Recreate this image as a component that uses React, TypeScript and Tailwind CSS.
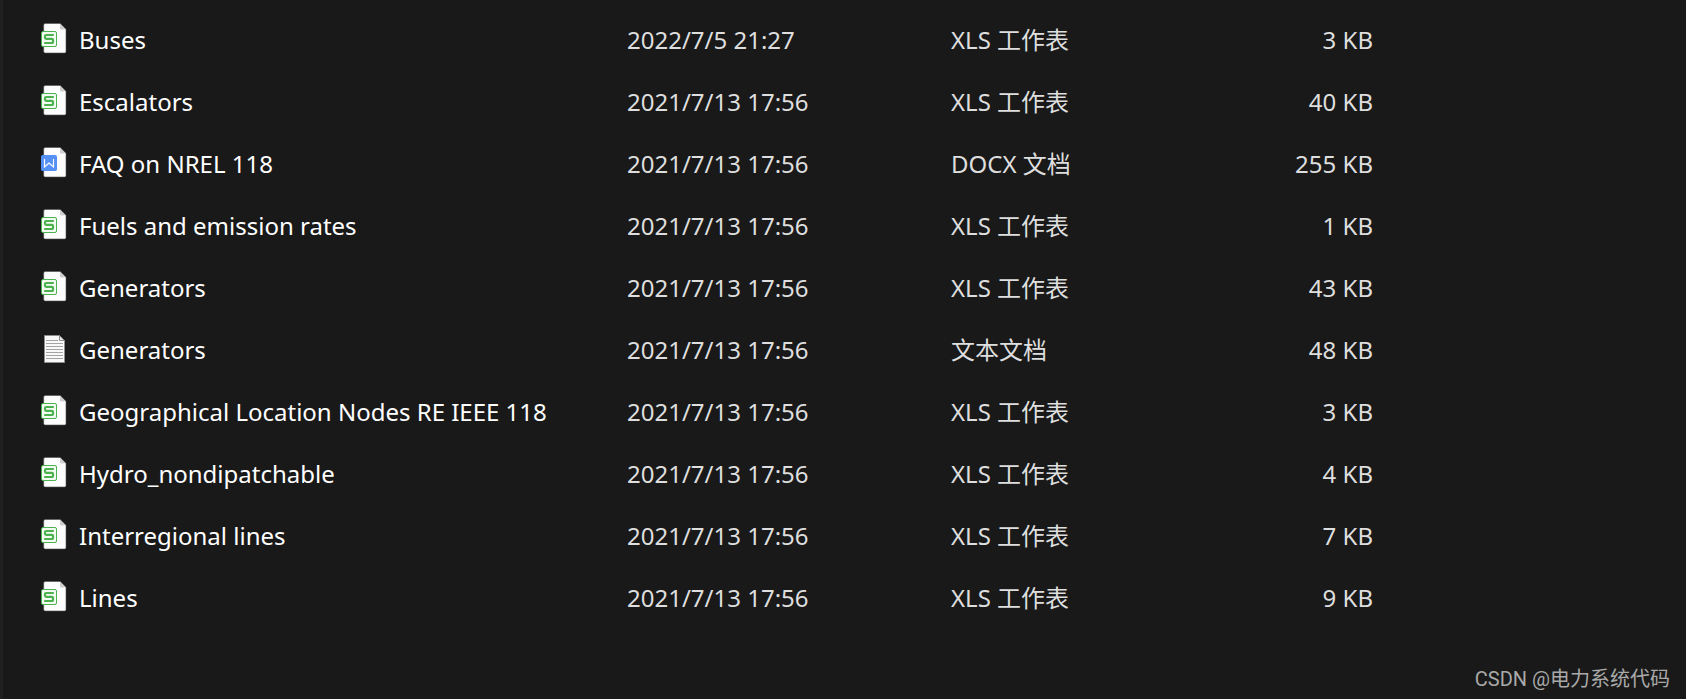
type FileKind = "xls" | "docx" | "txt";

type FileEntry = {
  name: string;
  modified: string;
  kind: FileKind;
  size: string;
};

const KIND_LABELS: Record<FileKind, string> = {
  xls: "XLS 工作表",
  docx: "DOCX 文档",
  txt: "文本文档",
};

const FILES: FileEntry[] = [
  { name: "Buses", modified: "2022/7/5 21:27", kind: "xls", size: "3 KB" },
  { name: "Escalators", modified: "2021/7/13 17:56", kind: "xls", size: "40 KB" },
  { name: "FAQ on NREL 118", modified: "2021/7/13 17:56", kind: "docx", size: "255 KB" },
  { name: "Fuels and emission rates", modified: "2021/7/13 17:56", kind: "xls", size: "1 KB" },
  { name: "Generators", modified: "2021/7/13 17:56", kind: "xls", size: "43 KB" },
  { name: "Generators", modified: "2021/7/13 17:56", kind: "txt", size: "48 KB" },
  {
    name: "Geographical Location Nodes RE IEEE 118",
    modified: "2021/7/13 17:56",
    kind: "xls",
    size: "3 KB",
  },
  { name: "Hydro_nondipatchable", modified: "2021/7/13 17:56", kind: "xls", size: "4 KB" },
  { name: "Interregional lines", modified: "2021/7/13 17:56", kind: "xls", size: "7 KB" },
  { name: "Lines", modified: "2021/7/13 17:56", kind: "xls", size: "9 KB" },
];

export default function App() {
  return (
    <div className="flex min-h-screen flex-col border-l-3 border-[#202020] bg-[#191919] font-['Noto_Sans','Noto_Sans_CJK_SC',sans-serif]">
      <main className="flex-1 pt-[9px] pl-9">
        <table className="w-full table-fixed text-left text-2xl whitespace-nowrap text-[#dedede]">
          <colgroup>
            <col className="w-[588px]" />
            <col className="w-[324px]" />
            <col className="w-[260px]" />
            <col className="w-[162px]" />
            <col />
          </colgroup>
          <tbody>
            {FILES.map((file) => (
              <tr key={`${file.name}.${file.kind}`} className="h-[62px]">
                <td className="p-0 text-white">
                  <div className="flex items-center gap-3">
                    <FileIcon kind={file.kind} />
                    <span>{file.name}</span>
                  </div>
                </td>
                <td className="p-0">{file.modified}</td>
                <td className="p-0">{KIND_LABELS[file.kind]}</td>
                <td className="p-0 text-right">{file.size}</td>
                <td className="p-0" />
              </tr>
            ))}
          </tbody>
        </table>
      </main>
      <footer className="px-4 pb-[6px] text-right font-[Roboto,'Noto_Sans_CJK_SC',sans-serif] text-xl text-[#a9a9a9]">
        CSDN @电力系统代码
      </footer>
    </div>
  );
}

function FileIcon({ kind }: { kind: FileKind }) {
  if (kind === "txt") {
    return (
      <svg viewBox="0 0 28 36" className="h-9 w-7 shrink-0" aria-hidden>
        <path d="M5.5 3.5h14.5l5.5 5v22h-20z" fill="#f8f8f8" stroke="#8d8d8d" />
        <path d="M20.5 3.5v5h5z" fill="#e4e4e4" stroke="#8d8d8d" />
        <path
          d="M7 8.5h12M7 11.5h17M7 14.5h17M7 17.5h17M7 20.5h17M7 23.5h17M7 26.5h17"
          stroke="#a3a3a3"
        />
      </svg>
    );
  }

  return (
    <svg viewBox="0 0 28 36" className="h-9 w-7 shrink-0" aria-hidden>
      <path
        d="M6.2 1.5h14.8l6 6v22a1.5 1.5 0 0 1-1.5 1.5h-19.3a1.5 1.5 0 0 1-1.5-1.5v-26.5a1.5 1.5 0 0 1 1.5-1.5z"
        fill="#fdfdfd"
        stroke="#505050"
        strokeWidth="0.6"
      />
      <path d="M21 1.5l6 6h-5a1 1 0 0 1-1-1z" fill="#cecece" />
      {kind === "xls" ? (
        <>
          <rect x="2.5" y="9.5" width="15" height="15" rx="1.5" fill="#f3fbf3" stroke="#4bb24f" />
          <path
            d="M14.8 13H7.2a1.2 1.2 0 0 0-1.2 1.2v1.4a1.2 1.2 0 0 0 1.2 1.2h5.6a1.2 1.2 0 0 1 1.2 1.2v1.8a1.2 1.2 0 0 1-1.2 1.2H5.2"
            fill="none"
            stroke="#4bb24f"
            strokeWidth="2.2"
          />
        </>
      ) : (
        <>
          <rect x="2" y="9" width="16" height="16" rx="1.8" fill="#5490f5" />
          <path d="M5.5 13v8l4.5-4 4.5 4v-8" fill="none" stroke="#fff" strokeWidth="1.2" />
        </>
      )}
    </svg>
  );
}
